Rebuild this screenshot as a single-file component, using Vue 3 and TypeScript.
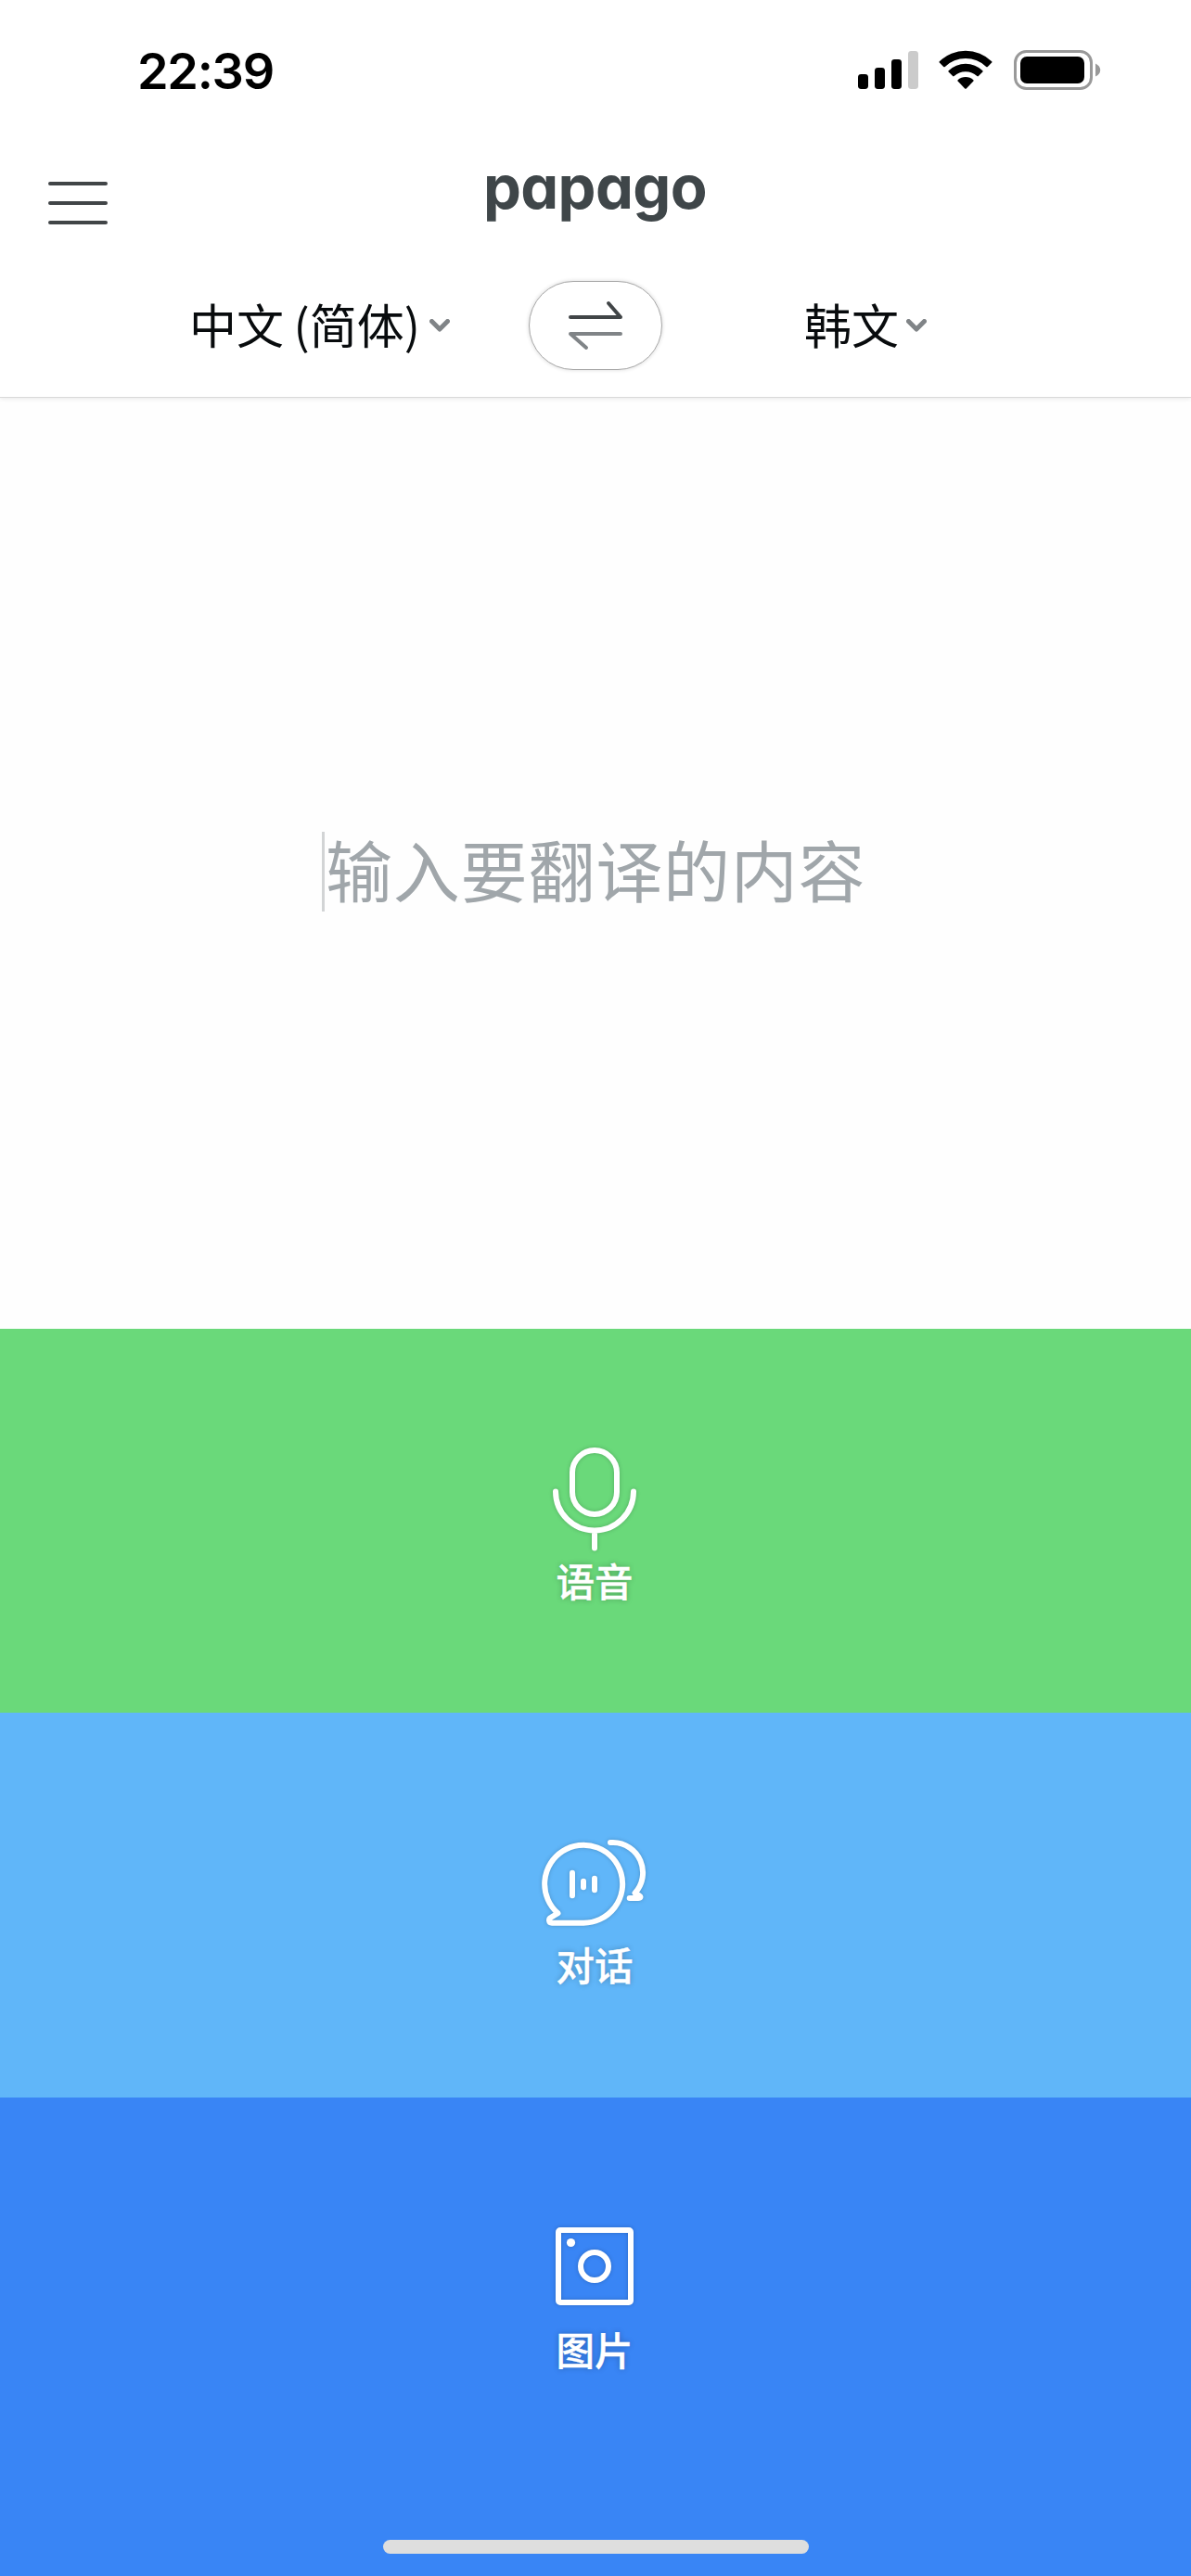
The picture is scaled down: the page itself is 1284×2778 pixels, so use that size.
<script setup lang="ts">
interface Mode {
  id: 'voice' | 'talk' | 'photo'
  label: string
}

const modes: Mode[] = [
  { id: 'voice', label: '语音' },
  { id: 'talk', label: '对话' },
  { id: 'photo', label: '图片' },
]
const signalBars = [
  { x: 0, y: 25, h: 16, fill: '#000' },
  { x: 18, y: 18, h: 23, fill: '#000' },
  { x: 36, y: 9, h: 32, fill: '#000' },
  { x: 54, y: 0, h: 41, fill: '#cbcbcb' },
]
</script>

<template>
  <div class="screen">
    <header class="header">
      <div class="status">
        <span class="time">22:39</span>
        <div class="status-icons">
          <svg class="signal" width="65" height="41" viewBox="0 0 65 41">
            <rect v-for="b in signalBars" :key="b.x" :x="b.x" :y="b.y" width="11" :height="b.h" rx="3.4" :fill="b.fill" />
          </svg>
          <svg class="wifi" width="58" height="43" viewBox="0 0 58 43">
            <path d="M0.8 12.2A40.5 40.5 0 0 1 57.2 12.2Q57.8 12.9 57.2 13.6L52.8 18Q52 18.6 51.2 18A32 32 0 0 0 6.8 18Q6 18.6 5.2 18L0.8 13.6Q0.2 12.9 0.8 12.2Z" />
            <path d="M10.6 22.2A26.5 26.5 0 0 1 47.4 22.2Q48 22.9 47.4 23.6L42.9 28.1Q42.1 28.7 41.3 28.1A18 18 0 0 0 16.7 28.1Q15.9 28.7 15.1 28.1L10.6 23.6Q10 22.9 10.6 22.2Z" />
            <path d="M20.6 32.2A12.5 12.5 0 0 1 37.4 32.2Q38 32.9 37.4 33.6L29.8 41.4Q29 42.1 28.2 41.4L20.6 33.6Q20 32.9 20.6 32.2Z" />
          </svg>
          <svg class="battery" width="94" height="43" viewBox="0 0 94 43">
            <rect x="1.5" y="1.5" width="82" height="40" rx="12" fill="none" stroke="#999" stroke-width="3" />
            <rect x="7" y="7" width="69" height="29" rx="7" />
            <path d="M88 14.5Q93.2 17 93.2 21.5Q93.2 26 88 28.5Z" fill="#999" />
          </svg>
        </div>
      </div>
      <div class="brand">
        <svg class="menu" width="64" height="46" viewBox="0 0 64 46">
          <path d="M2 2H62M2 23H62M2 44H62" fill="none" stroke="#414547" stroke-width="4" stroke-linecap="round" />
        </svg>
        <h1 class="logo">papago</h1>
      </div>
      <div class="languages">
        <div class="language source">
          <span>中文 (简体)</span>
          <svg class="chevron" width="22" height="14" viewBox="0 0 22 14">
            <path d="M2.5 2.5L11 11L19.5 2.5" />
          </svg>
        </div>
        <button class="swap" type="button">
          <svg width="60" height="54" viewBox="0 0 60 54">
            <path d="M3 18H57L44 3" stroke="#414547" />
            <path d="M57 36H3L20 51" stroke="#808487" />
          </svg>
        </button>
        <div class="language target">
          <span>韩文</span>
          <svg class="chevron" width="22" height="14" viewBox="0 0 22 14">
            <path d="M2.5 2.5L11 11L19.5 2.5" />
          </svg>
        </div>
      </div>
    </header>

    <main class="entry">
      <span class="caret"></span>
      <span class="placeholder">输入要翻译的内容</span>
    </main>

    <nav class="modes">
      <div v-for="m in modes" :key="m.id" class="mode" :class="m.id">
        <svg class="mode-icon" width="120" height="120" viewBox="0 0 120 120">
          <g v-if="m.id === 'voice'">
            <rect x="35" y="7" width="48" height="69" rx="24" />
            <path d="M17 51.5A42 42 0 0 0 101 51.5M59 93.5V112.5" />
          </g>
          <g v-else-if="m.id === 'talk'">
            <path d="M46.8 102.7H13C9.5 102.7 9 98.5 12 96.8L19.5 92.3A42 42 0 1 1 46.8 102.7Z" />
            <path d="M76 16H79A32.5 32.5 0 0 1 102.5 70.5L107 73C109.5 74.5 108.5 76 106 76H96.7" />
            <path d="M35 48.7V73.3M47 57.7V64.3M59 54.7V67.3" />
          </g>
          <g v-else>
            <rect x="20" y="19" width="78" height="78" rx="2" />
            <circle cx="59" cy="58" r="15" />
            <circle class="dot" cx="33.5" cy="32.5" r="4.6" />
          </g>
        </svg>
        <span class="mode-label">{{ m.label }}</span>
      </div>
      <div class="home-indicator"></div>
    </nav>
  </div>
</template>

<style>
body {
  margin: 0;
}
</style>

<style scoped>
.screen {
  width: 1284px;
  height: 2778px;
  display: flex;
  flex-direction: column;
  overflow: hidden;
  background: #fefefe;
  font-family: "Noto Sans CJK SC", sans-serif;
}
.header {
  box-sizing: border-box;
  height: 429px;
  flex: none;
  display: flex;
  flex-direction: column;
  background: #fff;
  border-bottom: 1px solid #d9d9d9;
  box-shadow: 0 1px 5px rgba(0, 0, 0, 0.09);
}
.status {
  height: 150px;
  display: flex;
  justify-content: space-between;
  padding: 0 97px 0 148px;
}
.time {
  margin-top: 44px;
  font: 600 54px/65px Inter, sans-serif;
  letter-spacing: -1.3px;
}
.status-icons {
  display: flex;
  padding-top: 54px;
}
.signal {
  margin-top: 1px;
}
.wifi {
  margin-left: 22px;
}
.battery {
  margin-left: 23px;
}
.brand {
  height: 142px;
  display: grid;
  grid-template-columns: 1fr auto 1fr;
}
.menu {
  margin: 46px 0 0 52px;
}
.logo {
  margin: 14px 1px 0 0;
  font: 750 65px/75px Inter, sans-serif;
  letter-spacing: -0.6px;
  font-feature-settings: "cv11";
  color: #3f4649;
}
.languages {
  display: grid;
  grid-template-columns: 570px 144px 570px;
}
.language {
  display: flex;
  align-items: center;
  font-size: 51px;
  line-height: 96px;
  margin-top: 11px;
  white-space: nowrap;
  color: #080b0d;
}
.language span {
  margin-top: -4px;
  word-spacing: -1px;
}
.source {
  padding-left: 204px;
}
.target {
  padding-left: 153px;
}
.chevron {
  margin-left: 10px;
}
.target .chevron {
  margin-left: 8px;
}
.chevron path {
  fill: none;
  stroke: #808487;
  stroke-width: 5;
  stroke-linecap: round;
  stroke-linejoin: round;
}
.swap {
  box-sizing: border-box;
  width: 144px;
  height: 96px;
  margin: 11px 0 0;
  padding: 0;
  display: flex;
  align-items: center;
  justify-content: center;
  background: #fff;
  border: 1px solid #a8a8a8;
  border-radius: 48px;
  box-shadow: 0 0 4px rgba(0, 0, 0, 0.16);
}
.swap path {
  fill: none;
  stroke-width: 4;
  stroke-linecap: round;
  stroke-linejoin: round;
}
.entry {
  flex: 1;
  display: flex;
  justify-content: flex-start;
  padding: 468px 0 0 347px;
}
.caret {
  width: 3px;
  height: 86px;
  background: #d2d4d5;
}
.placeholder {
  margin: -4px 0 0 1px;
  font-size: 72px;
  line-height: 86px;
  letter-spacing: 0.8px;
  color: #a0a6aa;
}
.modes {
  height: 1345px;
  flex: none;
  position: relative;
  display: grid;
  grid-template-rows: 414px 415px 516px;
}
.mode {
  display: flex;
  flex-direction: column;
  align-items: center;
}
.voice {
  background: #6ad97a;
}
.talk {
  background: #60b6f9;
}
.photo {
  background: #3985f5;
}
.mode-icon {
  margin: 124px 0 -3px;
  filter: drop-shadow(0 0 2px rgba(0, 0, 0, 0.2));
}
.mode-icon rect,
.mode-icon path,
.mode-icon circle {
  fill: none;
  stroke: #fff;
  stroke-width: 6;
  stroke-linecap: round;
  stroke-linejoin: round;
}
.mode-icon .dot {
  fill: #fff;
  stroke: none;
}
.mode-label {
  margin-right: 2px;
  font-size: 41.5px;
  line-height: 60px;
  font-weight: 500;
  color: #fff;
  -webkit-text-stroke: 0.4px #fff;
  text-shadow: 0 0 6px rgba(0, 0, 0, 0.28);
}
.home-indicator {
  position: absolute;
  left: 413px;
  bottom: 24px;
  width: 459px;
  height: 15px;
  border-radius: 8px;
  background: #dedede;
}
</style>
